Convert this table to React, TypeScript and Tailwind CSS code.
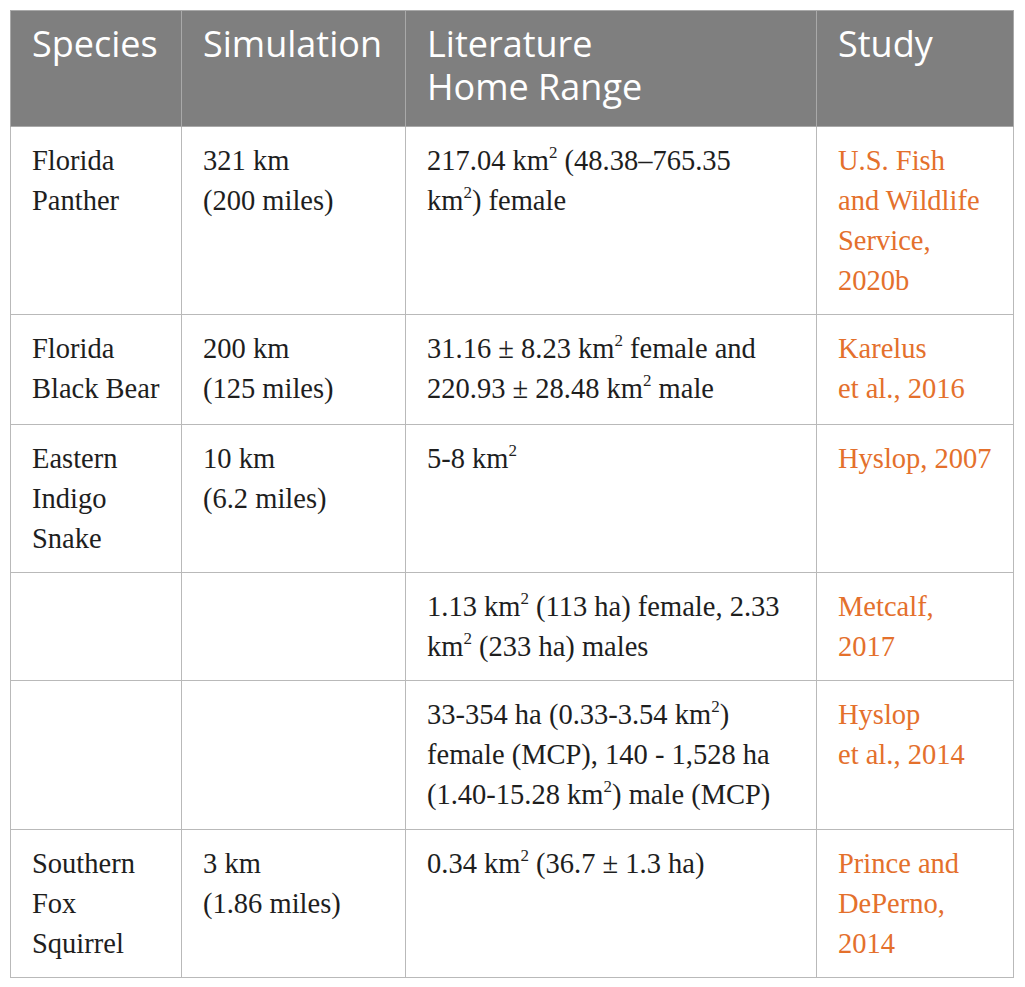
import React from "react";

const Sup = ({ children }: { children: React.ReactNode }) => (
  <sup className="text-[17px] leading-none relative top-[-2px] align-super">{children}</sup>
);

type Row = {
  h: string;
  species: React.ReactNode;
  sim: React.ReactNode;
  lit: React.ReactNode;
  study: React.ReactNode;
};

export default function App() {
  const rows: Row[] = [
    {
      h: "h-[187px]",
      species: (
        <>
          Florida
          <br />
          Panther
        </>
      ),
      sim: (
        <>
          321 km
          <br />
          (200 miles)
        </>
      ),
      lit: (
        <>
          217.04 km<Sup>2</Sup> (48.38–765.35
          <br />
          km<Sup>2</Sup>) female
        </>
      ),
      study: (
        <>
          U.S. Fish
          <br />
          and Wildlife
          <br />
          Service,
          <br />
          2020b
        </>
      ),
    },
    {
      h: "h-[110px]",
      species: (
        <>
          Florida
          <br />
          Black Bear
        </>
      ),
      sim: (
        <>
          200 km
          <br />
          (125 miles)
        </>
      ),
      lit: (
        <>
          31.16 ± 8.23 km<Sup>2</Sup> female and
          <br />
          220.93 ± 28.48 km<Sup>2</Sup> male
        </>
      ),
      study: (
        <>
          Karelus
          <br />
          et al., 2016
        </>
      ),
    },
    {
      h: "h-[148px]",
      species: (
        <>
          Eastern
          <br />
          Indigo
          <br />
          Snake
        </>
      ),
      sim: (
        <>
          10 km
          <br />
          (6.2 miles)
        </>
      ),
      lit: (
        <>
          5-8 km<Sup>2</Sup>
        </>
      ),
      study: <>Hyslop, 2007</>,
    },
    {
      h: "h-[108px]",
      species: null,
      sim: null,
      lit: (
        <>
          1.13 km<Sup>2</Sup> (113 ha) female, 2.33
          <br />
          km<Sup>2</Sup> (233 ha) males
        </>
      ),
      study: (
        <>
          Metcalf,
          <br />
          2017
        </>
      ),
    },
    {
      h: "h-[149px]",
      species: null,
      sim: null,
      lit: (
        <>
          33-354 ha (0.33-3.54 km<Sup>2</Sup>)
          <br />
          female (MCP), 140 - 1,528 ha
          <br />
          (1.40-15.28 km<Sup>2</Sup>) male (MCP)
        </>
      ),
      study: (
        <>
          Hyslop
          <br />
          et al., 2014
        </>
      ),
    },
    {
      h: "h-[148px]",
      species: (
        <>
          Southern
          <br />
          Fox
          <br />
          Squirrel
        </>
      ),
      sim: (
        <>
          3 km
          <br />
          (1.86 miles)
        </>
      ),
      lit: (
        <>
          0.34 km<Sup>2</Sup> (36.7 ± 1.3 ha)
        </>
      ),
      study: (
        <>
          Prince and
          <br />
          DePerno,
          <br />
          2014
        </>
      ),
    },
  ];

  const th =
    "align-top text-left font-normal text-white px-[21px] pt-[11px] border border-[#a9a9a9] whitespace-nowrap";
  const td =
    "align-top px-[21px] pt-[14px] pb-[13px] border border-[#b9b9b9] whitespace-nowrap";

  return (
    <div className="bg-white min-h-[987px] p-[10px]">
      <table className="table-fixed border-collapse w-[1003px]">
        <colgroup>
          <col className="w-[171px]" />
          <col className="w-[224px]" />
          <col className="w-[411px]" />
          <col className="w-[197px]" />
        </colgroup>
        <thead>
          <tr
            className="h-[116px] bg-[#7f7f7f] text-[36px] leading-[43px]"
            style={{ fontFamily: '"Open Sans", "Noto Sans", sans-serif' }}
          >
            <th className={th}>Species</th>
            <th className={th}>Simulation</th>
            <th className={th}>
              Literature
              <br />
              Home Range
            </th>
            <th className={th}>Study</th>
          </tr>
        </thead>
        <tbody
          className="text-[28.5px] leading-[40px] text-[#1e1e1e]"
          style={{ fontFamily: '"Liberation Serif", "Times New Roman", serif' }}
        >
          {rows.map((r, i) => (
            <tr key={i} className={r.h}>
              <td className={td}>{r.species}</td>
              <td className={td}>{r.sim}</td>
              <td className={td}>{r.lit}</td>
              <td className={td + " text-[#e4702c]"}>{r.study}</td>
            </tr>
          ))}
        </tbody>
      </table>
    </div>
  );
}
